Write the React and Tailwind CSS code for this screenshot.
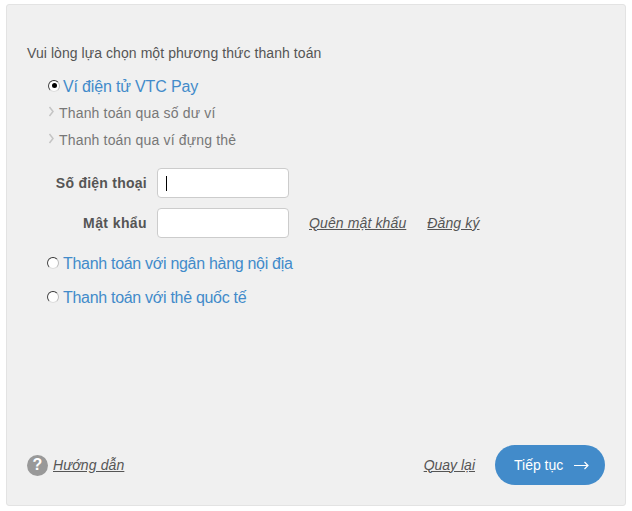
import React from 'react';

const Radio = ({ checked }) => (
  <span className="w-[12px] h-[12px] -mt-[3px] shrink-0 rounded-full bg-white border border-t-[#333] border-l-[#444] border-r-[#bbb] border-b-[#ddd] flex items-center justify-center">
    {checked && <span className="w-[5px] h-[5px] rounded-full bg-black"></span>}
  </span>
);

const Chevron = () => (
  <svg width="7" height="11" viewBox="0 0 7 11" className="shrink-0 -mt-[3px]" fill="none">
    <path d="M1.5 1 L5 5.5 L1.5 10" stroke="#c4c4c4" strokeWidth="1.5" />
  </svg>
);

const PayOption = ({ label, checked, className }) => (
  <div className={`flex items-center h-[20px] ${className}`}>
    <Radio checked={checked} />
    <span className={checked ? 'ml-[3px] text-[16px] tracking-[-0.16px] text-[#428bca]' : 'ml-[4px] text-[16px] tracking-[-0.3px] text-[#428bca]'}>{label}</span>
  </div>
);

const SubOption = ({ label, className }) => (
  <div className={`flex items-center h-[18px] text-[14px] tracking-[0.17px] text-[#777] ${className}`}>
    <Chevron />
    <span className="ml-[4px]">{label}</span>
  </div>
);

const LinkText = ({ children, className = '' }) => (
  <a href="#" className={`text-[14px] tracking-[0.12px] italic underline text-[#555] ${className}`}>{children}</a>
);

export default function App() {
  return (
    <div className="w-[632px] h-[511px] bg-white pt-[4px] pl-[6px] font-['Liberation_Sans',Arial,sans-serif]">
      <div className="w-[620px] h-[502px] bg-[#f0f0f0] border border-[#e3e3e3] rounded-[3px] flex flex-col px-[20px] pt-[39px] pb-[20px]">
        <p className="text-[14px] leading-[18px] tracking-[0.07px] text-[#555]">Vui lòng lựa chọn một phương thức thanh toán</p>

        <div className="pl-[21px] mt-[15px]">
          <PayOption label="Ví điện tử VTC Pay" checked />
          <SubOption label="Thanh toán qua số dư ví" className="mt-[7px]" />
          <SubOption label="Thanh toán qua ví đựng thẻ" className="mt-[9px]" />
        </div>

        {/* Login form */}
        <div className="mt-[19px] flex items-center gap-[10px]">
          <label className="w-[120px] text-right text-[14px] tracking-[0.25px] font-bold text-[#555]">Số điện thoại</label>
          <div className="w-[132px] h-[30px] bg-white border border-[#ccc] rounded-[4px] flex items-center pl-[8px]">
            <span className="w-px h-[15px] bg-black"></span>
          </div>
        </div>
        <div className="mt-[10px] flex items-center gap-[10px]">
          <label className="w-[120px] text-right text-[14px] tracking-[0.4px] font-bold text-[#555]">Mật khẩu</label>
          <div className="w-[132px] h-[30px] bg-white border border-[#ccc] rounded-[4px]"></div>
          <LinkText className="ml-[10px]">Quên mật khẩu</LinkText>
          <LinkText className="ml-[11px]">Đăng ký</LinkText>
        </div>

        <PayOption label="Thanh toán với ngân hàng nội địa" className="mt-[16px] ml-[20px]" />
        <PayOption label="Thanh toán với thẻ quốc tế" className="mt-[14px] ml-[20px]" />

        {/* Footer */}
        <div className="mt-auto flex items-center justify-between h-[40px]">
          <div className="flex items-center gap-[5px]">
            <span className="w-[21px] h-[21px] rounded-full bg-[#999] text-white font-bold text-[16px] flex items-center justify-center">?</span>
            <LinkText>Hướng dẫn</LinkText>
          </div>
          <div className="flex items-center gap-[20px]">
            <a href="#" className="text-[14px] italic underline text-[#555]">Quay lại</a>
            <button className="w-[110px] h-[40px] rounded-[20px] bg-[#428bca] text-white text-[14px] flex items-center pl-[19px] gap-[11px]">
              Tiếp tục
              <svg width="15" height="9" viewBox="0 0 15 9" fill="none" stroke="white" strokeWidth="1.2">
                <path d="M0 4.5 H14 M10.5 1 L14 4.5 L10.5 8" />
              </svg>
            </button>
          </div>
        </div>
      </div>
    </div>
  );
}
